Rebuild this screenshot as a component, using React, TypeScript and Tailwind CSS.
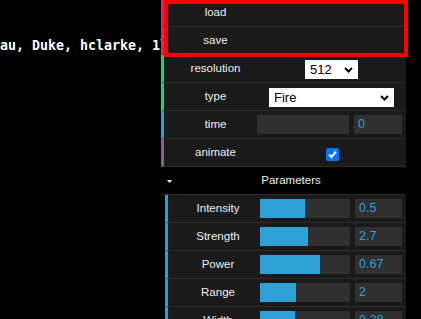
import React from "react";

const ui = { fontFamily: '"Liberation Sans", Arial, sans-serif' };

function Chevron() {
  return (
    <svg width="9" height="6" viewBox="0 0 9 6" className="shrink-0">
      <path d="M1 1 L4.5 4.5 L8 1" fill="none" stroke="#000" strokeWidth="2" />
    </svg>
  );
}

function Select({ value, className }: { value: string; className: string }) {
  return (
    <div
      className={`flex h-[19px] items-center justify-between bg-white pl-[5px] pr-[5px] text-[13px] text-black ${className}`}
      style={ui}
    >
      <span>{value}</span>
      <Chevron />
    </div>
  );
}

function Slider({ pct, w }: { pct: number; w: string }) {
  return (
    <div className={`h-[19px] bg-[#303030] ${w}`}>
      <div className="h-full bg-[#2fa1d6]" style={{ width: `${pct}%` }} />
    </div>
  );
}

function NumberBox({ value, w }: { value: string; w: string }) {
  return (
    <div className={`flex h-[19px] items-center bg-[#303030] pl-[4px] text-[12.5px] text-[#2fa1d6] ${w}`}>
      {value}
    </div>
  );
}

function Row({
  stripe,
  label,
  children,
}: {
  stripe: string;
  label: string;
  children?: React.ReactNode;
}) {
  return (
    <div className={`flex h-[28px] items-center border-b border-l-[3px] border-b-[#2c2c2c] bg-[#1a1a1a] ${stripe}`}>
      <div className="w-[93px] shrink-0 pl-[10px] text-center text-[11.5px] text-[#eee]">{label}</div>
      <div className="flex items-center">{children}</div>
    </div>
  );
}

function ParamRow({ label, pct, value }: { label: string; pct: number; value: string }) {
  return (
    <div className="flex h-[28px] items-center border-b border-l-[3px] border-b-[#2c2c2c] border-l-[#2fa1d6] bg-[#1a1a1a]">
      <div className="w-[92px] shrink-0 pl-[8px] text-center text-[11.5px] text-[#eee]">{label}</div>
      <Slider pct={pct} w="w-[90px]" />
      <div className="w-[5px]" />
      <NumberBox value={value} w="w-[47px]" />
    </div>
  );
}

export default function App() {
  return (
    <div className="flex h-[319px] w-[421px] overflow-hidden bg-black">
      <div className="min-w-0 flex-1 overflow-hidden whitespace-nowrap">
        <div
          className="mt-[38px] text-[13.3px] font-bold leading-[16px] text-white"
          style={{ fontFamily: '"DejaVu Sans Mono", monospace' }}
        >
          au, Duke, hclarke, 1llustrious
        </div>
      </div>

      <div className="relative -mt-px w-[245px] shrink-0" style={ui}>
        <Row stripe="border-l-[#e61d5f]" label="load" />
        <Row stripe="border-l-[#e61d5f]" label="save" />
        <Row stripe="border-l-[#1ed36f]" label="resolution">
          <Select value="512" className="ml-[48px] mt-[2px] w-[53px]" />
        </Row>
        <Row stripe="border-l-[#1ed36f]" label="type">
          <Select value="Fire" className="ml-[12px] mt-[2px] w-[125px]" />
        </Row>
        <Row stripe="border-l-[#2fa1d6]" label="time">
          <Slider pct={0} w="w-[92px]" />
          <div className="w-[5px]" />
          <NumberBox value="0" w="w-[48px]" />
        </Row>
        <Row stripe="border-l-[#806787]" label="animate">
          <div className="ml-[69px] mt-[4px] flex h-[13px] w-[13px] items-center justify-center rounded-[2px] bg-[#0075ff]">
            <svg width="11" height="11" viewBox="0 0 11 11">
              <path d="M2 5.5 L4.5 8 L9 2.5" fill="none" stroke="#fff" strokeWidth="2" />
            </svg>
          </div>
        </Row>

        <div className="flex h-[28px] items-center border-b border-[#2c2c2c] bg-black">
          <svg width="5" height="3" viewBox="0 0 5 3" className="ml-[6px] mt-[1px]">
            <path d="M0 0 H5 L2.5 3 Z" fill="#fff" />
          </svg>
          <div className="flex-1 pl-[4px] text-center text-[11.5px] text-[#eee]">Parameters</div>
        </div>

        <div className="ml-[4px]">
          <ParamRow label="Intensity" pct={50} value="0.5" />
          <ParamRow label="Strength" pct={53} value="2.7" />
          <ParamRow label="Power" pct={67} value="0.67" />
          <ParamRow label="Range" pct={40} value="2" />
          <ParamRow label="Width" pct={39} value="0.28" />
        </div>

        <div className="absolute left-[3px] top-[1px] h-[57px] w-[244px] border-4 border-[#ff0000]" />
      </div>

      <div className="w-[15px] shrink-0" />
    </div>
  );
}
